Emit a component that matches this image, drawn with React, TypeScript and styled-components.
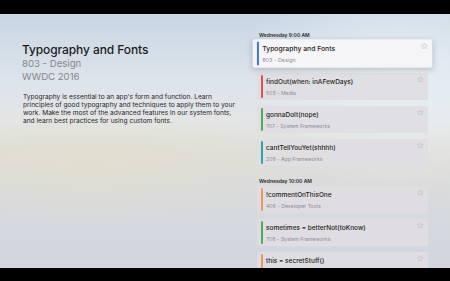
import React from "react";
import styled, { createGlobalStyle } from "styled-components";

const GlobalStyle = createGlobalStyle`
  html, body { margin: 0; padding: 0; background: #000; }
  body { font-family: Inter, "Noto Sans", sans-serif; -webkit-font-smoothing: antialiased; }
  * { box-sizing: border-box; }
`;

const Screen = styled.div`
  width: 450px;
  height: 281px;
  background: #000;
  padding-top: 14px;
  overflow: hidden;
`;

const Stage = styled.div`
  height: 254px;
  overflow: hidden;
  display: grid;
  grid-template-columns: 257px 171px;
  background:
    radial-gradient(ellipse 160px 120px at 400px 60px, rgba(235, 243, 250, 0.7), rgba(235, 243, 250, 0) 100%),
    radial-gradient(ellipse 200px 60px at 90px 150px, rgba(226, 222, 205, 0.7), rgba(226, 222, 205, 0) 100%),
    linear-gradient(180deg, #c8d6e3 0%, #dce3ea 25%, #e4e6e6 42%, #dfded7 55%, #d9dbdc 70%, #d0d5df 100%);
`;

const Info = styled.div`
  padding: 28px 0 0 22px;
  display: flex;
  flex-direction: column;
`;

const Title = styled.h1`
  margin: 0;
  font-size: 12px;
  line-height: 15px;
  font-weight: 500;
  color: #1c1c1e;
  letter-spacing: -0.1px;
`;

const Meta = styled.div`
  font-size: 9.6px;
  line-height: 13px;
  color: #85868c;
`;

const Description = styled.p`
  margin: 10px 0 0 1px;
  font-size: 6.6px;
  line-height: 8px;
  color: #26262a;
`;

const ListColumn = styled.div`
  padding-top: 18px;
  display: flex;
  flex-direction: column;
  gap: 12px;
`;

const Section = styled.section`
  display: flex;
  flex-direction: column;
`;

const SectionHeader = styled.div`
  font-size: 5px;
  line-height: 6px;
  font-weight: 600;
  color: #2a2a2e;
  padding-left: 2px;
  margin-bottom: 2px;
`;

const Cards = styled.div`
  display: flex;
  flex-direction: column;
  gap: 6px;
`;

const Card = styled.div<{ $focused?: boolean }>`
  height: 27px;
  display: flex;
  align-items: stretch;
  padding: 2px 4px 2px 4px;
  border-radius: 2px;
  background: ${(p) => (p.$focused ? "#f5f4f6" : "rgba(224, 221, 226, 0.92)")};
  box-shadow: ${(p) => (p.$focused ? "0 2px 6px rgba(0,0,0,0.18)" : "none")};
  transform: ${(p) => (p.$focused ? "scale(1.05)" : "none")};
  position: relative;
  z-index: ${(p) => (p.$focused ? 1 : 0)};
`;

const Bar = styled.div<{ $color: string }>`
  width: 2px;
  border-radius: 1px;
  background: ${(p) => p.$color};
  flex: none;
`;

const CardText = styled.div`
  padding: 3px 0 0 3px;
  display: flex;
  flex-direction: column;
  flex: 1;
  min-width: 0;
`;

const CardTitle = styled.div`
  font-size: 6.5px;
  line-height: 8px;
  font-weight: 500;
  color: #1e1e20;
  white-space: nowrap;
`;

const CardSub = styled.div`
  margin-top: 3px;
  font-size: 5.2px;
  line-height: 8px;
  color: #8e8e93;
  white-space: nowrap;
`;

const StarIcon = styled.svg`
  width: 7px;
  height: 7px;
  margin-top: 1px;
  flex: none;
`;

const Star = () => (
  <StarIcon viewBox="0 0 24 24">
    <path
      d="M12 2.5l2.9 6.1 6.6.8-4.9 4.6 1.3 6.6L12 17.3l-5.9 3.3 1.3-6.6-4.9-4.6 6.6-.8z"
      fill="none"
      stroke="#b6b6bb"
      strokeWidth="1.5"
      strokeLinejoin="round"
    />
  </StarIcon>
);

type Session = { title: string; sub?: string; color: string; focused?: boolean };

const sections: { header: string; sessions: Session[] }[] = [
  {
    header: "Wednesday 9:00 AM",
    sessions: [
      { title: "Typography and Fonts", sub: "803 - Design", color: "#4a7ccc", focused: true },
      { title: "findOut(when: inAFewDays)", sub: "503 - Media", color: "#d9534a" },
      { title: "gonnaDoIt(nope)", sub: "707 - System Frameworks", color: "#4cae55" },
      { title: "cantTellYouYet(shhhh)", sub: "209 - App Frameworks", color: "#2aa8a4" },
    ],
  },
  {
    header: "Wednesday 10:00 AM",
    sessions: [
      { title: "!commentOnThisOne", sub: "406 - Developer Tools", color: "#e89a5c" },
      { title: "sometimes = betterNot(toKnow)", sub: "708 - System Frameworks", color: "#4cae55" },
      { title: "this = secretStuff()", color: "#e89a5c" },
    ],
  },
];

export default function App() {
  return (
    <>
      <GlobalStyle />
      <Screen>
        <Stage>
          <Info>
            <Title>Typography and Fonts</Title>
            <Meta>803 - Design</Meta>
            <Meta>WWDC 2016</Meta>
            <Description>
              Typography is essential to an app's form and function. Learn
              <br />
              principles of good typography and techniques to apply them to your
              <br />
              work. Make the most of the advanced features in our system fonts,
              <br />
              and learn best practices for using custom fonts.
            </Description>
          </Info>
          <ListColumn>
            {sections.map((s) => (
              <Section key={s.header}>
                <SectionHeader>{s.header}</SectionHeader>
                <Cards>
                  {s.sessions.map((c) => (
                    <Card key={c.title} $focused={c.focused}>
                      <Bar $color={c.color} />
                      <CardText>
                        <CardTitle>{c.title}</CardTitle>
                        {c.sub && <CardSub>{c.sub}</CardSub>}
                      </CardText>
                      <Star />
                    </Card>
                  ))}
                </Cards>
              </Section>
            ))}
          </ListColumn>
        </Stage>
      </Screen>
    </>
  );
}
